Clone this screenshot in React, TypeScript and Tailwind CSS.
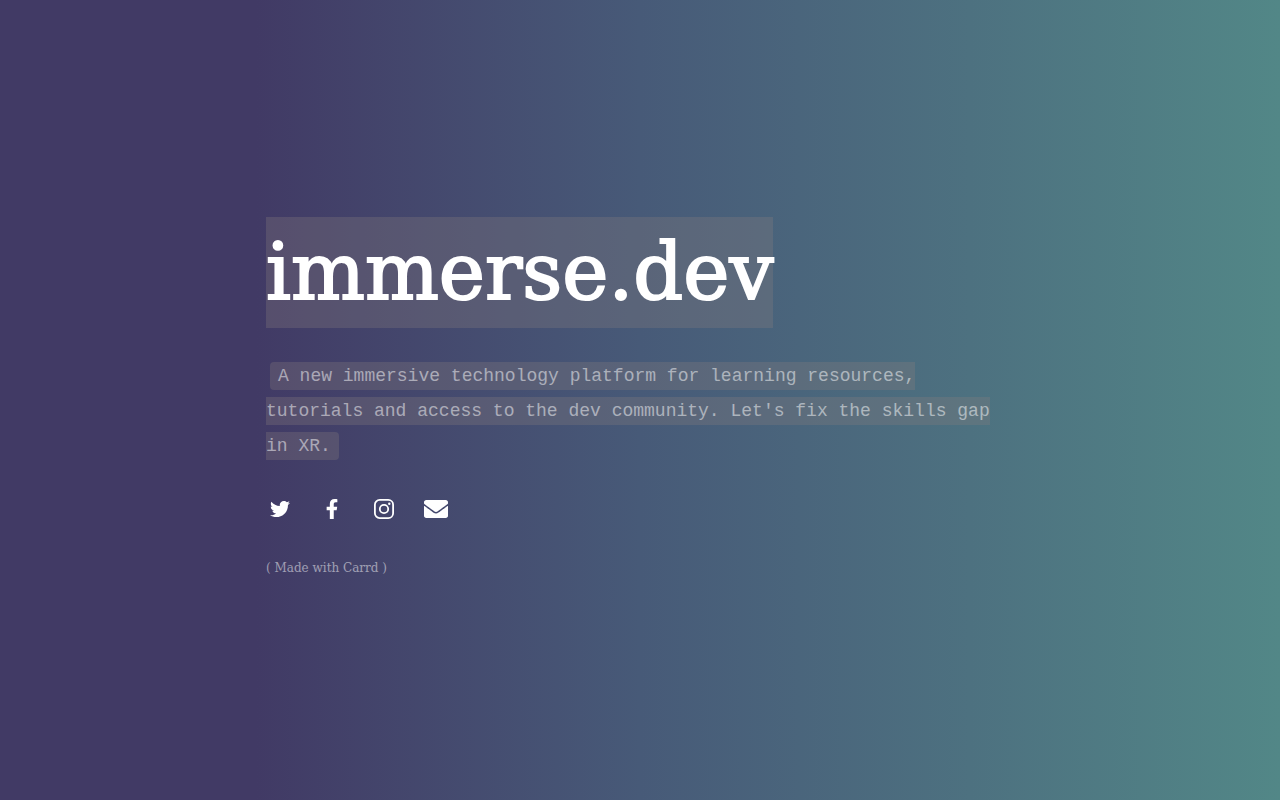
import type { ReactNode } from "react";
import { FaEnvelope, FaFacebookF, FaTwitter } from "react-icons/fa";

type SocialLinkProps = {
  label: string;
  href: string;
  children: ReactNode;
};

function SocialLink({ label, href, children }: SocialLinkProps) {
  return (
    <a href={href} aria-label={label} className="flex h-7 w-7 items-center justify-center">
      {children}
    </a>
  );
}

function InstagramIcon() {
  return (
    <svg viewBox="0 0 20 20" className="h-5 w-5" fill="none" stroke="currentColor" strokeWidth="1.8" aria-hidden="true">
      <rect x="0.9" y="0.9" width="18.2" height="18.2" rx="4.8" />
      <circle cx="10" cy="10" r="4.2" />
      <circle cx="15.3" cy="4.7" r="1.2" fill="currentColor" stroke="none" />
    </svg>
  );
}

export default function App() {
  return (
    <div className="flex min-h-screen items-center justify-center bg-linear-to-r from-[#413a65] from-20% via-[#475a78] via-50% to-[#528787] px-6 py-12">
      <main className="w-full max-w-[748px] text-white">
        <h1 className="w-fit bg-[#887d7d]/30 font-['DejaVu_Serif',serif] text-[78px] leading-[111px] [-webkit-text-stroke:2px_white]">
          immerse.dev
        </h1>
        <p className="mt-[31px] font-['Liberation_Mono',monospace] text-lg leading-[35px] text-white/50">
          <span className="ml-1 rounded-sm bg-[#887d7d]/30 px-2 py-1">
            A new immersive technology platform for learning resources, tutorials and access to the dev
            community. Let's fix the skills gap in XR.
          </span>
        </p>
        <nav aria-label="Social links" className="mt-[31px] flex gap-6">
          <SocialLink label="Twitter" href="#twitter">
            <FaTwitter className="h-5 w-5" />
          </SocialLink>
          <SocialLink label="Facebook" href="#facebook">
            <FaFacebookF className="h-5 w-5" />
          </SocialLink>
          <SocialLink label="Instagram" href="#instagram">
            <InstagramIcon />
          </SocialLink>
          <SocialLink label="Email" href="#email">
            <FaEnvelope className="h-6 w-6" />
          </SocialLink>
        </nav>
        <footer className="mt-[30px] font-['DejaVu_Serif',serif] text-xs leading-[30px] text-white/50">
          <a href="#carrd">( Made with Carrd )</a>
        </footer>
      </main>
    </div>
  );
}
